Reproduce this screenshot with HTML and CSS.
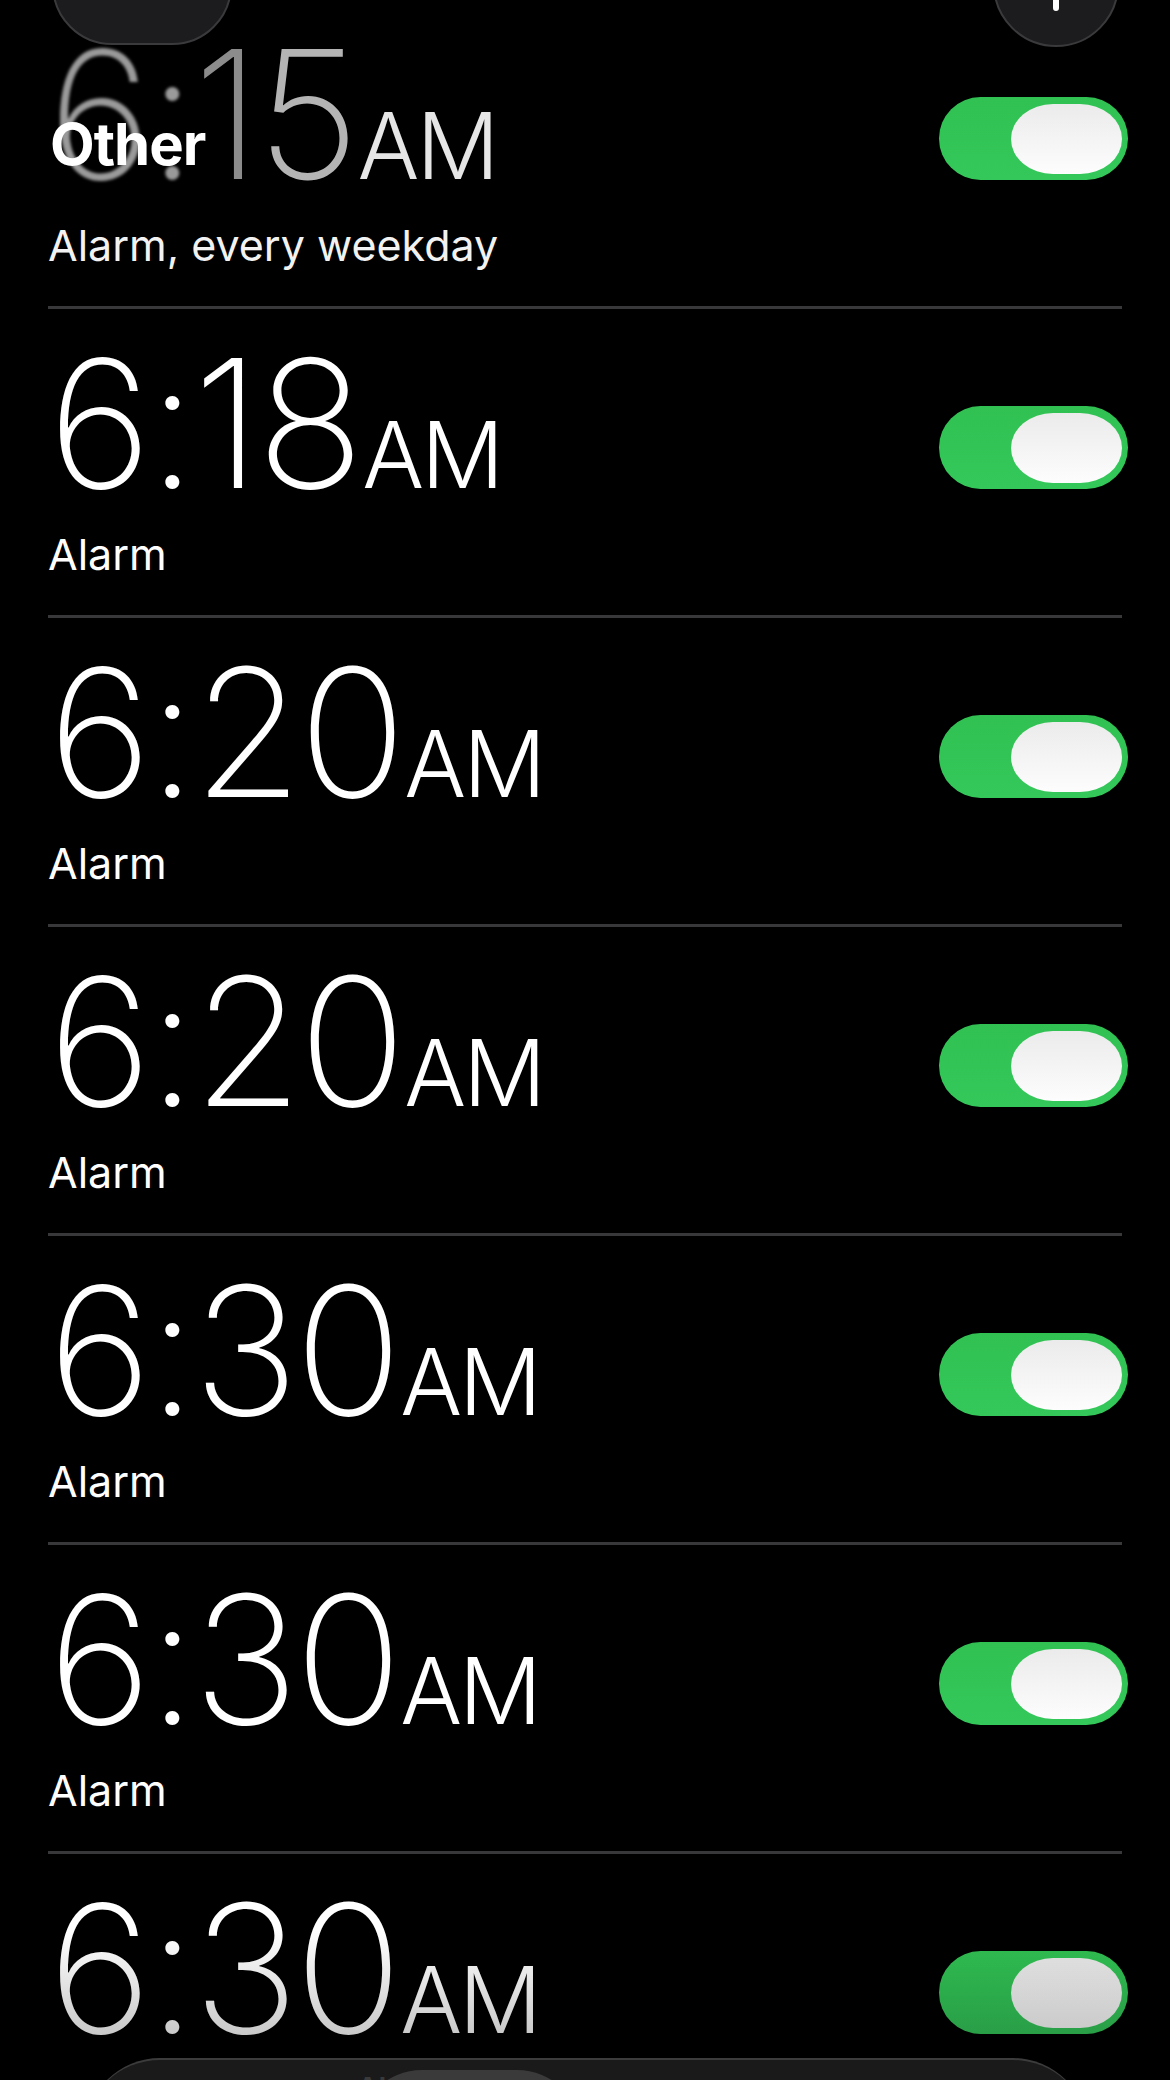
FILE: index.html
```html
<!DOCTYPE html>
<html lang="en">
<head>
    <meta charset="UTF-8">
    <meta name="viewport" content="width=device-width, initial-scale=1.0">
    <title>Alarms</title>
    <link rel="stylesheet" href="styles.css">
</head>
<body>

    <div class="phone">
        <div class="navbar">
            <button class="nav-edit">Edit</button>
            <button class="nav-add" aria-label="Add alarm">
                <svg width="60" height="60" viewBox="0 0 60 60"><path d="M30 6v48M6 30h48" stroke="#fff" stroke-width="6" stroke-linecap="round" fill="none"/></svg>
            </button>
        </div>

        <ul class="alarms">
            <li class="alarm faded">
                <div class="info">
                    <div class="time"><span class="blur">6:</span><span class="dim">1</span><span class="mid">5</span><span class="ampm">AM</span></div>
                    <div class="label">Alarm, every weekday</div>
                </div>
                <span class="toggle"><span class="knob"></span></span>
                <h2 class="section-title">Other</h2>
            </li>
            <li class="alarm">
                <div class="info">
                    <div class="time">6:18<span class="ampm">AM</span></div>
                    <div class="label">Alarm</div>
                </div>
                <span class="toggle"><span class="knob"></span></span>
            </li>
            <li class="alarm">
                <div class="info">
                    <div class="time">6:20<span class="ampm">AM</span></div>
                    <div class="label">Alarm</div>
                </div>
                <span class="toggle"><span class="knob"></span></span>
            </li>
            <li class="alarm">
                <div class="info">
                    <div class="time">6:20<span class="ampm">AM</span></div>
                    <div class="label">Alarm</div>
                </div>
                <span class="toggle"><span class="knob"></span></span>
            </li>
            <li class="alarm">
                <div class="info">
                    <div class="time">6:30<span class="ampm">AM</span></div>
                    <div class="label">Alarm</div>
                </div>
                <span class="toggle"><span class="knob"></span></span>
            </li>
            <li class="alarm">
                <div class="info">
                    <div class="time">6:30<span class="ampm">AM</span></div>
                    <div class="label">Alarm</div>
                </div>
                <span class="toggle"><span class="knob"></span></span>
            </li>
            <li class="alarm">
                <div class="info">
                    <div class="time">6:30<span class="ampm">AM</span></div>
                    <div class="label">Alarm</div>
                </div>
                <span class="toggle"><span class="knob"></span></span>
            </li>
        </ul>

        <div class="bottom-fade"></div>

        <nav class="tabbar">
            <span class="tab">World Clock</span>
            <span class="tab active">Alarms</span>
        </nav>
    </div>

</body>
</html>
```

FILE: styles.css
```css
body {
    margin: 0;
    background: #000;
    font-family: Inter, "Liberation Sans", sans-serif;
    color: #fff;
}
.phone {
    position: relative;
    width: 1170px;
    height: 2080px;
    overflow: hidden;
    background: #000;
}

/* top bar, mostly scrolled out of view */
.navbar {
    position: absolute;
    top: 0;
    left: 0;
    right: 0;
    z-index: 3;
}
.nav-edit {
    position: absolute;
    left: 52px;
    top: -81px;
    width: 180px;
    height: 126px;
    border-radius: 60px;
    background: #1c1c1e;
    border: 2px solid #3a3a3c;
    color: #fff;
    font-family: Inter, sans-serif;
    font-size: 40px;
    padding-top: 8px;
}
.nav-add {
    position: absolute;
    left: 993px;
    top: -79px;
    width: 126px;
    height: 126px;
    border-radius: 50%;
    background: #1c1c1e;
    border: 2px solid #3a3a3c;
    display: flex;
    align-items: center;
    justify-content: center;
    padding: 0;
}

.alarms {
    list-style: none;
    margin: 0;
    padding: 0;
}
.alarm {
    position: relative;
    display: flex;
    justify-content: space-between;
    align-items: flex-start;
    height: 306px;
    margin: 0 48px;
    border-bottom: 3px solid #38383a;
}
.time {
    font-size: 178px;
    font-weight: 200;
    line-height: 1;
    padding-top: 26px;
    letter-spacing: -4px;
    white-space: nowrap;
}
.ampm {
    font-size: 92px;
    font-weight: 300;
    letter-spacing: -3px;
    margin-left: 2px;
}
.label {
    font-size: 43px;
    line-height: 1.2;
    margin-top: 16px;
}

.toggle {
    display: flex;
    justify-content: flex-end;
    align-items: center;
    width: 189px;
    height: 83px;
    box-sizing: border-box;
    padding-right: 6px;
    margin-top: 97px;
    margin-right: -6px;
    border-radius: 42px;
    background: linear-gradient(#30c152, #34c85a);
}
.knob {
    width: 111px;
    height: 70px;
    border-radius: 42px / 35px;
    background: linear-gradient(#ebebeb, #fdfdfd);
}

/* first row is sliding under the section header */
.faded .time {
    color: #8c8c8c;
}
.faded .blur {
    filter: blur(1.5px);
    color: #9a9a9a;
}
.faded .mid {
    color: #b4b4b4;
}
.faded .ampm {
    color: #e6e6e6;
}
.faded .label {
    color: #f2f2f2;
}
.section-title {
    position: absolute;
    left: 2px;
    top: 115px;
    margin: 0;
    font-size: 58px;
    font-weight: 700;
    line-height: 1;
    letter-spacing: -1px;
    color: #fff;
}

.bottom-fade {
    position: absolute;
    left: 0;
    right: 0;
    bottom: 0;
    height: 150px;
    background: linear-gradient(rgba(0, 0, 0, 0), rgba(0, 0, 0, 0.3));
    z-index: 2;
}
.tabbar {
    position: absolute;
    left: 85px;
    right: 82px;
    top: 2058px;
    height: 150px;
    border-radius: 80px;
    background: #1a1a1a;
    border-top: 2px solid #3c3c3c;
    display: flex;
    gap: 20px;
    padding: 10px 0 0 75px;
    box-sizing: border-box;
    z-index: 3;
}
.tab {
    font-size: 30px;
    font-weight: 600;
    color: #4a4a4a;
    padding-top: 12px;
}
.tab.active {
    width: 225px;
    height: 130px;
    border-radius: 65px;
    background: #3a3a3a;
    color: #3a3a3a;
    padding-top: 0;
}
```
